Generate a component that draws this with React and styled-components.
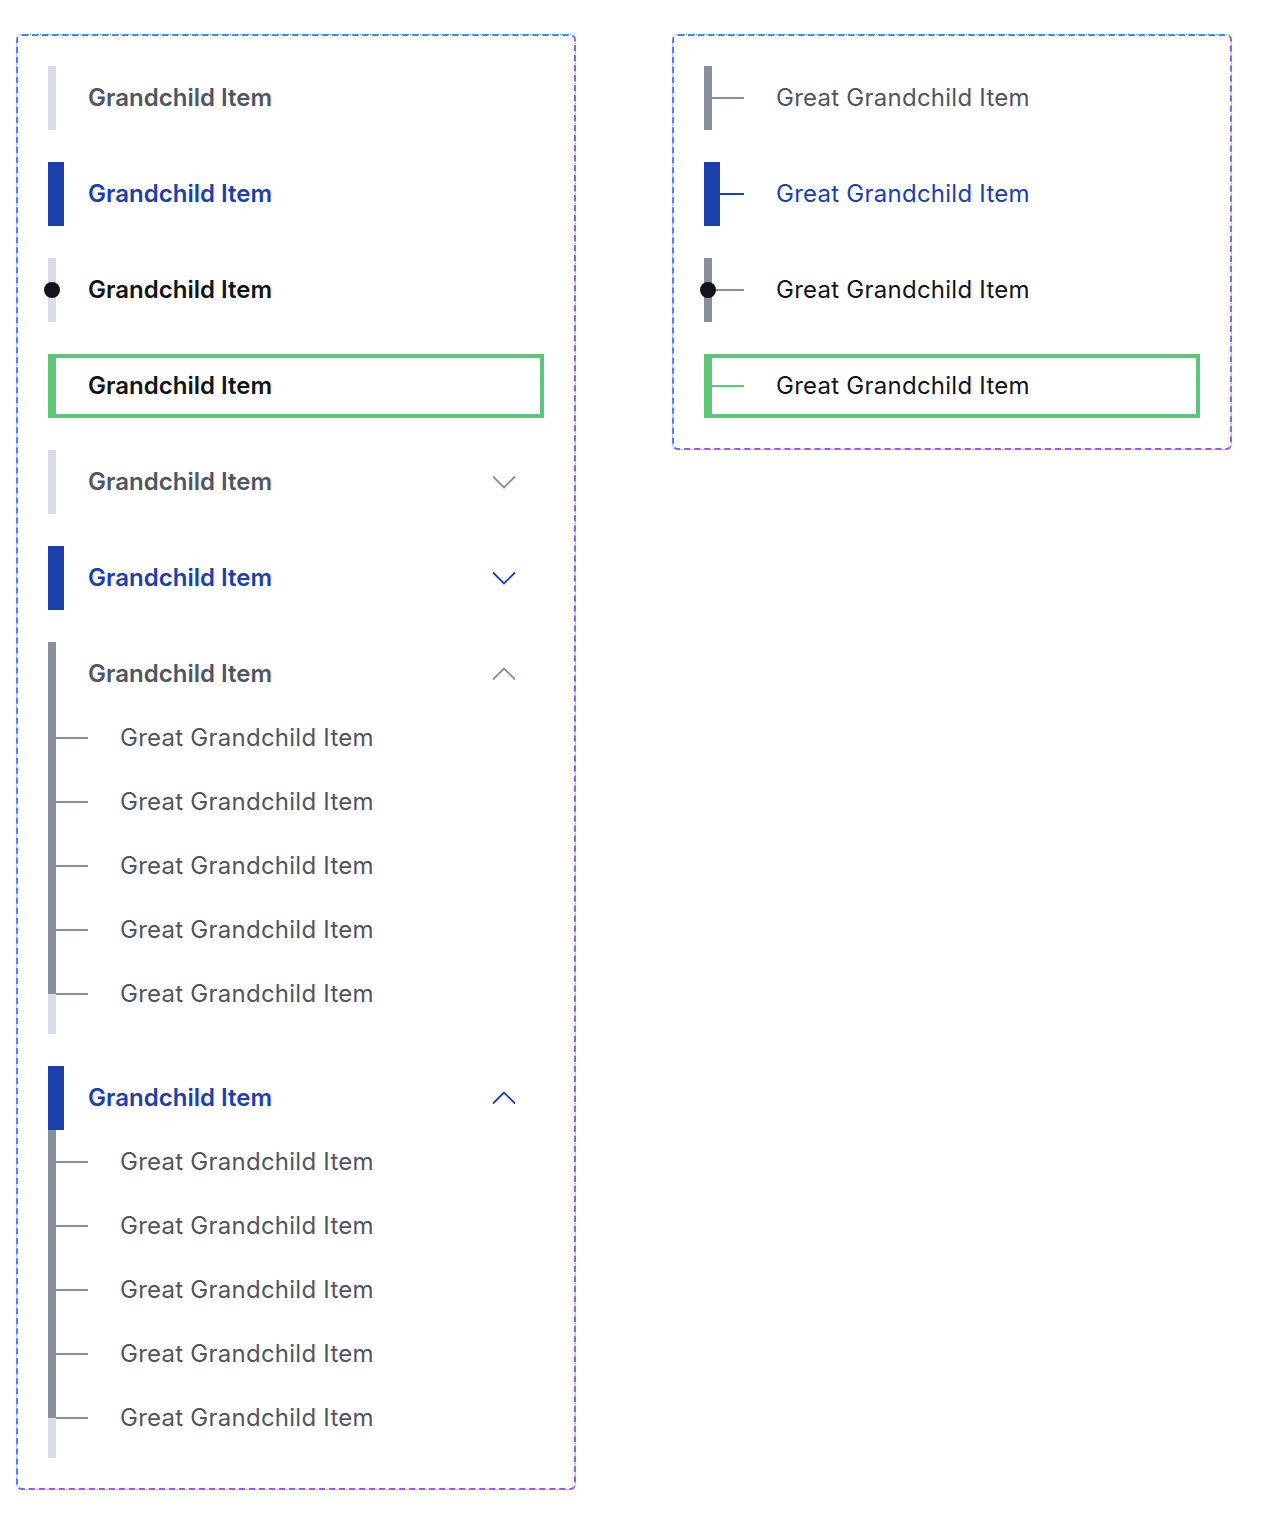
import React from 'react';
import styled, { createGlobalStyle, css } from 'styled-components';

const colors = {
    rail: '#d7dde6',
    railDark: '#878e9c',
    blue: '#1b40ad',
    gray: '#4f5563',
    black: '#121419',
    green: '#5cc877',
};

const GlobalStyle = createGlobalStyle`
    body {
        margin: 0;
        background: #fff;
        font-family: Inter, 'Noto Sans', sans-serif;
    }
`;

const Page = styled.div`
    display: flex;
    align-items: flex-start;
    gap: 96px;
    padding: 34px 16px;
`;

const Panel = styled.div`
    box-sizing: border-box;
    width: 560px;
    padding: 30px;
    border: 2px dashed #9450ff;
    outline: 1px dotted #47a0ff;
    outline-offset: -1.5px;
    border-radius: 6px;
    display: flex;
    flex-direction: column;
    gap: 32px;
`;

const textColor = {
    default: colors.gray,
    expanded: colors.gray,
    active: colors.blue,
    selected: colors.black,
    focus: colors.black,
};

const Row = styled.div`
    position: relative;
    box-sizing: border-box;
    height: 64px;
    display: flex;
    align-items: center;
    border-left: 8px solid ${colors.rail};
    padding-left: 32px;
    color: ${(p) => textColor[p.$variant]};

    ${(p) => p.$variant === 'expanded' && css`
        border-left-color: ${colors.railDark};
    `}
    ${(p) => p.$variant === 'active' && css`
        border-left: 16px solid ${colors.blue};
        padding-left: 24px;
    `}
    ${(p) => p.$variant === 'focus' && css`
        border: 4px solid ${colors.green};
        border-left-width: 8px;
    `}
    ${(p) => p.$variant === 'selected' && css`
        &::before {
            content: '';
            position: absolute;
            left: -12px;
            top: 24px;
            width: 16px;
            height: 16px;
            border-radius: 50%;
            background: ${colors.black};
        }
    `}
`;

const Label = styled.span`
    flex: 1;
    font-size: 24px;
    font-weight: 600;
    line-height: 1;
`;

const Chevron = styled.svg`
    width: 24px;
    height: 24px;
    margin-right: 28px;
    flex: none;
`;

const Group = styled.div`
    display: flex;
    flex-direction: column;
`;

const Children = styled.div`
    display: flex;
    flex-direction: column;
    padding-bottom: 8px;
    background:
        linear-gradient(${colors.railDark}, ${colors.railDark}) left top / 8px calc(100% - 40px) no-repeat,
        linear-gradient(${colors.rail}, ${colors.rail}) left top / 8px 100% no-repeat;
`;

const leafRail = {
    default: colors.railDark,
    active: colors.blue,
    selected: colors.railDark,
};

const Leaf = styled.div`
    position: relative;
    box-sizing: border-box;
    height: 64px;
    display: flex;
    align-items: center;
    border-left: ${(p) => (p.$variant === 'active' ? 16 : 8)}px solid
        ${(p) => leafRail[p.$variant] || colors.railDark};
    color: ${(p) => textColor[p.$variant] || colors.gray};

    ${(p) => p.$nested && css`
        border-left: none;
        padding-left: 8px;
    `}
    ${(p) => p.$variant === 'focus' && css`
        border: 4px solid ${colors.green};
        border-left-width: 8px;
    `}
    ${(p) => p.$variant === 'selected' && css`
        &::before {
            content: '';
            position: absolute;
            left: -12px;
            top: 24px;
            width: 16px;
            height: 16px;
            border-radius: 50%;
            background: ${colors.black};
        }
    `}
`;

const connectorColor = {
    active: colors.blue,
    focus: colors.green,
};

const Connector = styled.span`
    flex: none;
    width: ${(p) => (p.$variant === 'active' ? 24 : 32)}px;
    height: 1.5px;
    background: ${(p) => connectorColor[p.$variant] || colors.railDark};
`;

const LeafLabel = styled.span`
    margin-left: 32px;
    font-size: 24px;
    font-weight: 400;
    letter-spacing: 0.25px;
    line-height: 1;
`;

function ChevronIcon({ up, color }) {
    return (
        <Chevron viewBox="0 0 24 24" fill="none">
            <path
                d={up ? 'M1 17.5L12 6.5L23 17.5' : 'M1 6.5L12 17.5L23 6.5'}
                stroke={color}
                strokeWidth="1.8"
            />
        </Chevron>
    );
}

function GrandchildRow({ variant = 'default', chevron }) {
    const chevColor = variant === 'active' ? colors.blue : colors.railDark;
    return (
        <Row $variant={variant}>
            <Label>Grandchild Item</Label>
            {chevron && <ChevronIcon up={chevron === 'up'} color={chevColor} />}
        </Row>
    );
}

function LeafRow({ variant = 'default', nested }) {
    return (
        <Leaf $variant={variant} $nested={nested}>
            <Connector $variant={variant} />
            <LeafLabel>Great Grandchild Item</LeafLabel>
        </Leaf>
    );
}

const kids = [1, 2, 3, 4, 5];

function ExpandedGroup({ variant }) {
    return (
        <Group>
            <GrandchildRow variant={variant} chevron="up" />
            <Children>
                {kids.map((k) => (
                    <LeafRow key={k} nested />
                ))}
            </Children>
        </Group>
    );
}

export default function App() {
    return (
        <>
            <GlobalStyle />
            <Page>
                <Panel>
                    <GrandchildRow />
                    <GrandchildRow variant="active" />
                    <GrandchildRow variant="selected" />
                    <GrandchildRow variant="focus" />
                    <GrandchildRow chevron="down" />
                    <GrandchildRow variant="active" chevron="down" />
                    <ExpandedGroup variant="expanded" />
                    <ExpandedGroup variant="active" />
                </Panel>
                <Panel>
                    <LeafRow />
                    <LeafRow variant="active" />
                    <LeafRow variant="selected" />
                    <LeafRow variant="focus" />
                </Panel>
            </Page>
        </>
    );
}
